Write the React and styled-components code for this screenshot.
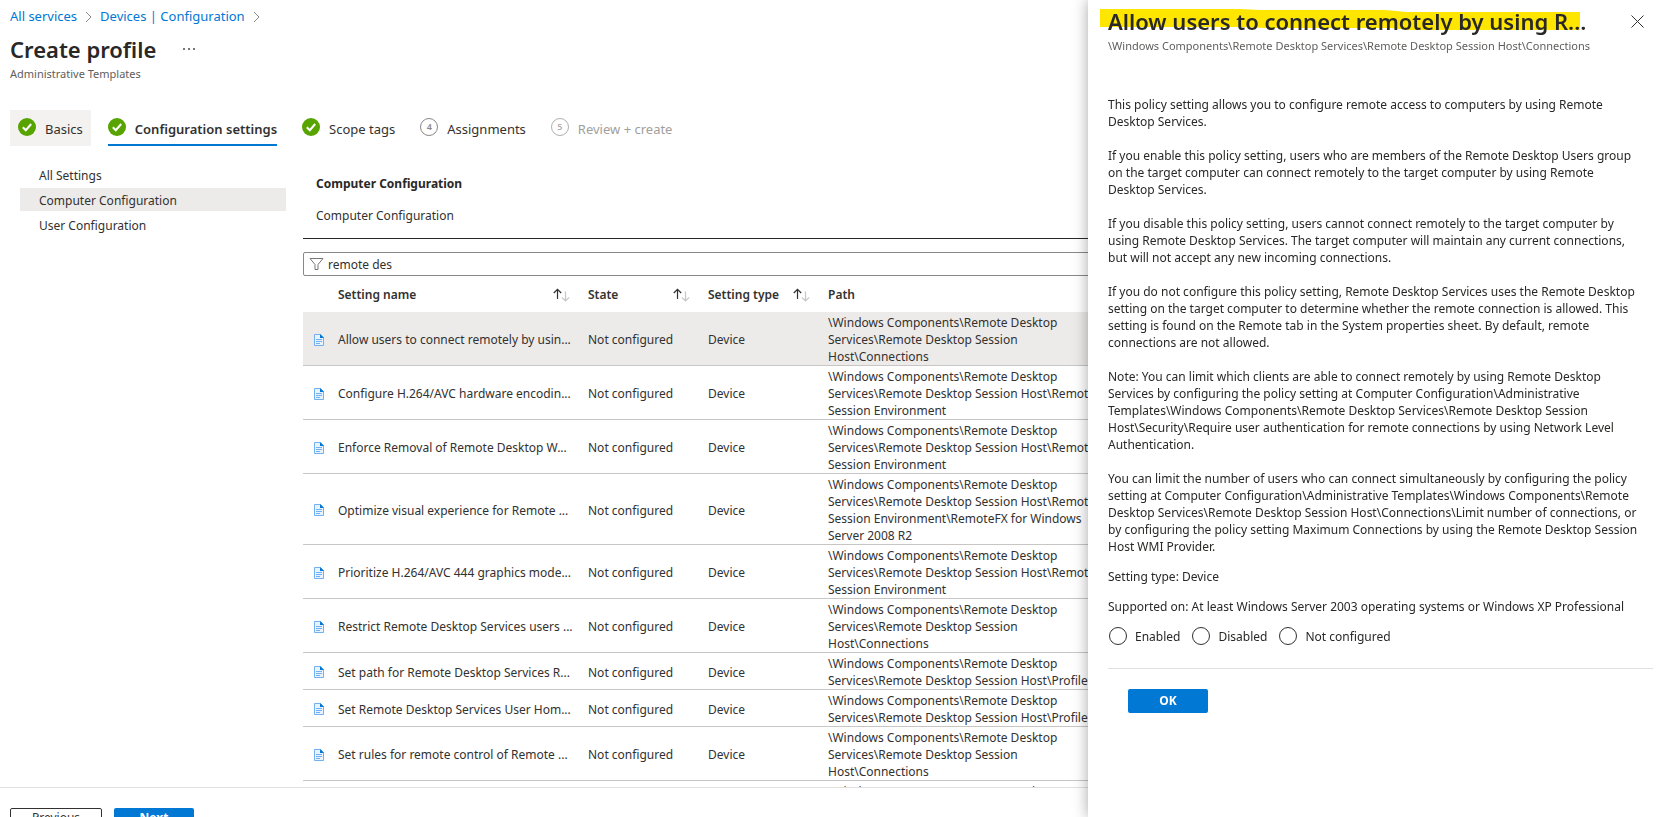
import React, { useState } from 'react'
import styled, { createGlobalStyle } from 'styled-components'

const GlobalStyle=createGlobalStyle`
  * {
    box-sizing: border-box;
  }
  body {
    margin: 0;
    overflow: hidden;
    background-color: white;
    color: #292827;
    font-family: "Noto Sans", "Segoe UI", sans-serif;
    font-size: 12px;
    line-height: 17px;
  }
  button, input {
    font-family: inherit;
    color: inherit;
  }
`;

const Page=styled.div`
  height: 100vh;
  display: flex;
  flex-direction: column;
  overflow: hidden;
`;

const Main=styled.main`
  flex: 1;
  min-height: 0;
  overflow: hidden;
`;

const Breadcrumb=styled.nav`
  display: flex;
  align-items: center;
  height: 33px;
  padding: 0 10px;
  gap: 8px;
  font-size: 13px;
`;

const Crumb=styled.a`
  color: #0078d4;
  text-decoration: none;
`;

const TitleRow=styled.div`
  display: flex;
  align-items: center;
  gap: 27px;
  height: 32px;
  padding: 0 10px;
`;

const Title=styled.h1`
  margin: 0;
  font-size: 22px;
  line-height: 32px;
  font-weight: 600;
`;

const MoreButton=styled.button`
  display: flex;
  padding: 0;
  border: none;
  background: none;
  cursor: pointer;
`;

const SubTitle=styled.p`
  margin: 0;
  font-size: 11px;
  color: #605e5c;
`;

const PageSubTitle=styled(SubTitle)`
  padding: 0 10px;
`;

const Steps=styled.div`
  display: flex;
  gap: 9px;
  margin-top: 28px;
  padding: 0 10px;
`;

const Step=styled.button`
  height: 36px;
  padding: 0 8px;
  border: none;
  background-color: ${(p) => (p.$visited ? '#f3f2f1' : 'transparent')};
  color: ${(p) => (p.disabled ? '#a19f9d' : '#323130')};
  font-size: 13px;
  font-weight: ${(p) => (p.$active ? 600 : 400)};
  cursor: pointer;
`;

const StepInner=styled.span`
  display: flex;
  align-items: center;
  gap: 9px;
  height: 36px;
  border-bottom: 2px solid ${(p) => (p.$active ? '#0078d4' : 'transparent')};
`;

const StepText=styled.span`
  padding-top: 4px;
`;

const StepNumber=styled.span`
  width: 18px;
  height: 18px;
  border: 1px solid currentColor;
  border-radius: 50%;
  color: ${(p) => (p.$faded ? '#b3b0ad' : '#8a8886')};
  font-size: 9px;
  line-height: 16px;
  font-weight: 600;
  text-align: center;
`;

const Body=styled.div`
  display: flex;
  gap: 17px;
  padding-left: 20px;
`;

const SideNav=styled.nav`
  display: flex;
  flex-direction: column;
  flex: 0 0 266px;
  gap: 2px;
  margin-top: 17px;
`;

const SideLink=styled.a`
  height: 23px;
  padding-left: 19px;
  line-height: 26px;
  color: #323130;
  text-decoration: none;
  background-color: ${(p) => (p.$active ? '#edebe9' : 'transparent')};
`;

const Content=styled.section`
  flex: 1;
  min-width: 0;
  margin-top: 29px;
`;

const Heading=styled.h2`
  margin: 0 13px;
  font-size: 12px;
  line-height: 18px;
  font-weight: 700;
`;

const Location=styled.p`
  margin: 14px 13px 13px;
  line-height: 18px;
  color: #323130;
`;

const Separator=styled.div`
  height: 1px;
  background-color: #292827;
`;

const FilterBox=styled.label`
  display: flex;
  align-items: center;
  gap: 4px;
  height: 24px;
  margin-top: 13px;
  padding: 0 5px;
  border: 1px solid #8a8886;
  border-radius: 2px;
`;

const FilterInput=styled.input`
  flex: 1;
  padding: 0;
  border: none;
  outline: none;
  background: none;
  font-size: 12px;
  color: #323130;
`;

const Table=styled.table`
  width: 100%;
  border-collapse: collapse;
  table-layout: fixed;
  color: #323130;
`;

const HeadCell=styled.th`
  width: ${(p) => p.$width || 'auto'};
  height: 36px;
  padding: 1px 0 0;
  font-weight: 600;
  text-align: left;
`;

const HeadInner=styled.div`
  display: flex;
  align-items: center;
  justify-content: space-between;
  padding-right: 18px;
`;

const SortButton=styled.button`
  display: flex;
  padding: 0;
  border: none;
  background: none;
  cursor: pointer;
`;

const Row=styled.tr`
  border-bottom: 1px solid #c8c6c4;
  background-color: ${(p) => (p.$selected ? '#edebe9' : 'transparent')};
`;

const Cell=styled.td`
  padding: 2px 0 0;
  white-space: pre-line;
`;

const IconCell=styled(Cell)`
  padding-left: 11px;
  line-height: 0;
`;

const Footer=styled.footer`
  flex: 0 0 30px;
  display: flex;
  align-items: flex-start;
  gap: 12px;
  padding: 20px 10px 0;
  overflow: hidden;
  border-top: 1px solid #e1dfdd;
`;

const Button=styled.button`
  width: 80px;
  height: 24px;
  flex: none;
  padding: 0;
  border: none;
  border-radius: 2px;
  background-color: #0078d4;
  color: white;
  font-size: 12px;
  line-height: 22px;
  font-weight: 700;
  cursor: pointer;
`;

const FooterButton=styled(Button)`
  padding-bottom: 4px;
  line-height: 18px;
`;

const OutlineButton=styled(FooterButton)`
  width: 92px;
  border: 1px solid #323130;
  background-color: white;
  color: #323130;
  font-weight: 400;
`;

/* context blade, opens over the page */
const Blade=styled.aside`
  position: fixed;
  top: 0;
  right: 0;
  bottom: 0;
  width: 581px;
  padding: 5px 16px 0 20px;
  background-color: white;
  box-shadow: 0 0 14px rgba(0, 0, 0, 0.35);
`;

const BladeHeader=styled.div`
  display: flex;
  align-items: center;
  justify-content: space-between;
  padding-right: 9px;
`;

const BladeTitle=styled.h2`
  position: relative;
  margin: 0;
  font-size: 22px;
  line-height: 32px;
  font-weight: 600;
`;

const BladeTitleText=styled.span`
  position: relative;
  white-space: nowrap;
`;

/* marker stroke behind the title */
const Highlight=styled.svg`
  position: absolute;
  top: 3px;
  left: -8px;
`;

const CloseButton=styled.button`
  display: flex;
  padding: 0;
  border: none;
  background: none;
  cursor: pointer;
`;

const Description=styled.p`
  margin: 42px 0 0;
  white-space: pre-line;
`;

const Info=styled.p`
  margin: 13px 0 0;
`;

const RadioGroup=styled.fieldset`
  display: flex;
  gap: 12px;
  margin: 12px 0 0;
  padding: 0 1px;
  border: none;
`;

const RadioLabel=styled.label`
  display: flex;
  align-items: center;
  gap: 8px;
`;

const Radio=styled.input`
  appearance: none;
  width: 18px;
  height: 18px;
  margin: 0;
  border: 1px solid #323130;
  border-radius: 50%;
  &:checked {
    border: 5px solid #0078d4;
  }
`;

const BladeFooter=styled.div`
  margin-top: 23px;
  padding: 20px;
  border-top: 1px solid #e1dfdd;
`;

const description=`This policy setting allows you to configure remote access to computers by using Remote
Desktop Services.

If you enable this policy setting, users who are members of the Remote Desktop Users group
on the target computer can connect remotely to the target computer by using Remote
Desktop Services.

If you disable this policy setting, users cannot connect remotely to the target computer by
using Remote Desktop Services. The target computer will maintain any current connections,
but will not accept any new incoming connections.

If you do not configure this policy setting, Remote Desktop Services uses the Remote Desktop
setting on the target computer to determine whether the remote connection is allowed. This
setting is found on the Remote tab in the System properties sheet. By default, remote
connections are not allowed.

Note: You can limit which clients are able to connect remotely by using Remote Desktop
Services by configuring the policy setting at Computer Configuration\\Administrative
Templates\\Windows Components\\Remote Desktop Services\\Remote Desktop Session
Host\\Security\\Require user authentication for remote connections by using Network Level
Authentication.

You can limit the number of users who can connect simultaneously by configuring the policy
setting at Computer Configuration\\Administrative Templates\\Windows Components\\Remote
Desktop Services\\Remote Desktop Session Host\\Connections\\Limit number of connections, or
by configuring the policy setting Maximum Connections by using the Remote Desktop Session
Host WMI Provider.`

const base='\\Windows Components\\Remote Desktop\nServices\\Remote Desktop Session'
const connections=base+'\nHost\\Connections'
const environment=base+' Host\\Remote\nSession Environment'
const profiles=base+' Host\\Profiles'

const settings=[
  { name: 'Allow users to connect remotely by usin...', path: connections },
  { name: 'Configure H.264/AVC hardware encodin...', path: environment },
  { name: 'Enforce Removal of Remote Desktop W...', path: environment },
  { name: 'Optimize visual experience for Remote ...', path: environment+'\\RemoteFX for Windows\nServer 2008 R2' },
  { name: 'Prioritize H.264/AVC 444 graphics mode...', path: environment },
  { name: 'Restrict Remote Desktop Services users ...', path: connections },
  { name: 'Set path for Remote Desktop Services R...', path: profiles },
  { name: 'Set Remote Desktop Services User Hom...', path: profiles },
  { name: 'Set rules for remote control of Remote ...', path: connections },
  { name: 'Start a program on connection', path: environment },
]

function Chevron() {
  return (
    <svg width="7" height="12" viewBox="0 0 7 12" fill="none" stroke="#8a8886">
      <path d="M1 1l5 5-5 5" />
    </svg>
  )
}

function CheckIcon() {
  return (
    <svg width="18" height="18" viewBox="0 0 18 18">
      <circle cx="9" cy="9" r="9" fill="#57a300" />
      <path d="M4.8 9.2l3 3 5.4-6.2" fill="none" stroke="white" strokeWidth="2" />
    </svg>
  )
}

function SortIcon() {
  return (
    <svg width="17" height="14" viewBox="0 0 17 14" fill="none">
      <path d="M4.500 11V1.500M.8 5l3.700-3.700L8.200 5" stroke="#323130" strokeWidth="1.200" />
      <path d="M12.500 3.500V13M8.800 9.300l3.700 3.700 3.700-3.700" stroke="#c8c6c4" strokeWidth="1.200" />
    </svg>
  )
}

function DocIcon() {
  return (
    <svg width="10" height="12" viewBox="0 0 10 12">
      <path d="M.5.500h6l3 3v8h-9z" fill="#e9f3fd" stroke="#71b1f1" />
      <path d="M6 0l4 4H6z" fill="#0078d4" />
      <path d="M2 5.500h6M2 7.500h6M2 9.500h4" stroke="#71b1f1" />
    </svg>
  )
}

function FilterIcon() {
  return (
    <svg width="15" height="14" viewBox="0 0 15 14" fill="none" stroke="#797775">
      <path d="M1 1.500h13L9 7.500v5H6v-5z" />
    </svg>
  )
}

function SortHead({ label, width }) {
  return (
    <HeadCell $width={width}>
      <HeadInner>
        {label}
        <SortButton aria-label={'Sort by '+label}><SortIcon /></SortButton>
      </HeadInner>
    </HeadCell>
  )
}

export default function App() {
  const [filter, setFilter]=useState('remote des')
  const [state, setState]=useState('')

  return (
    <Page>
      <GlobalStyle />
      <Main>
        <Breadcrumb>
          <Crumb href="#services">All services</Crumb>
          <Chevron />
          <Crumb href="#configuration">Devices | Configuration</Crumb>
          <Chevron />
        </Breadcrumb>
        <TitleRow>
          <Title>Create profile</Title>
          <MoreButton aria-label="More">
            <svg width="12" height="2" viewBox="0 0 12 2" fill="#797775">
              <path d="M0 0h2v2H0zM5 0h2v2H5zM10 0h2v2h-2z" />
            </svg>
          </MoreButton>
        </TitleRow>
        <PageSubTitle>Administrative Templates</PageSubTitle>
        <Steps>
          <Step $visited>
            <StepInner><CheckIcon /><StepText>Basics</StepText></StepInner>
          </Step>
          <Step $active>
            <StepInner $active><CheckIcon /><StepText>Configuration settings</StepText></StepInner>
          </Step>
          <Step>
            <StepInner><CheckIcon /><StepText>Scope tags</StepText></StepInner>
          </Step>
          <Step>
            <StepInner><StepNumber>4</StepNumber><StepText>Assignments</StepText></StepInner>
          </Step>
          <Step disabled>
            <StepInner><StepNumber $faded>5</StepNumber><StepText>Review + create</StepText></StepInner>
          </Step>
        </Steps>
        <Body>
          <SideNav>
            <SideLink href="#all">All Settings</SideLink>
            <SideLink href="#computer" $active>Computer Configuration</SideLink>
            <SideLink href="#user">User Configuration</SideLink>
          </SideNav>
          <Content>
            <Heading>Computer Configuration</Heading>
            <Location>Computer Configuration</Location>
            <Separator />
            <FilterBox>
              <FilterIcon />
              <FilterInput aria-label="Filter settings" type="text" value={filter} onChange={(e) => setFilter(e.target.value)} />
            </FilterBox>
            <Table>
              <thead>
                <tr>
                  <HeadCell $width="35px" />
                  <SortHead label="Setting name" width="250px" />
                  <SortHead label="State" width="120px" />
                  <SortHead label="Setting type" width="120px" />
                  <HeadCell>Path</HeadCell>
                </tr>
              </thead>
              <tbody>
                {settings.map((s, i) => (
                  <Row key={s.name} $selected={i === 0}>
                    <IconCell><DocIcon /></IconCell>
                    <Cell>{s.name}</Cell>
                    <Cell>Not configured</Cell>
                    <Cell>Device</Cell>
                    <Cell>{s.path}</Cell>
                  </Row>
                ))}
              </tbody>
            </Table>
          </Content>
        </Body>
      </Main>
      <Footer>
        <OutlineButton>Previous</OutlineButton>
        <FooterButton>Next</FooterButton>
      </Footer>
      <Blade>
        <BladeHeader>
          <BladeTitle>
            <Highlight width="480" height="22" viewBox="0 0 480 22" fill="#ffe600">
              <path d="M0 1H140L160 2H285L307 4H480V22H310L290 20H165L140 19H0z" />
            </Highlight>
            <BladeTitleText>Allow users to connect remotely by using R...</BladeTitleText>
          </BladeTitle>
          <CloseButton aria-label="Close">
            <svg width="13" height="13" viewBox="0 0 13 13" stroke="#323130">
              <path d="M.5.500l12 12M12.500.500l-12 12" />
            </svg>
          </CloseButton>
        </BladeHeader>
        <SubTitle>{'\\Windows Components\\Remote Desktop Services\\Remote Desktop Session Host\\Connections'}</SubTitle>
        <Description>{description}</Description>
        <Info>Setting type: Device</Info>
        <Info>Supported on: At least Windows Server 2003 operating systems or Windows XP Professional</Info>
        <RadioGroup>
          {['Enabled', 'Disabled', 'Not configured'].map((o) => (
            <RadioLabel key={o}>
              <Radio type="radio" name="state" checked={state === o} onChange={() => setState(o)} />
              {o}
            </RadioLabel>
          ))}
        </RadioGroup>
        <BladeFooter>
          <Button>OK</Button>
        </BladeFooter>
      </Blade>
    </Page>
  )
}
